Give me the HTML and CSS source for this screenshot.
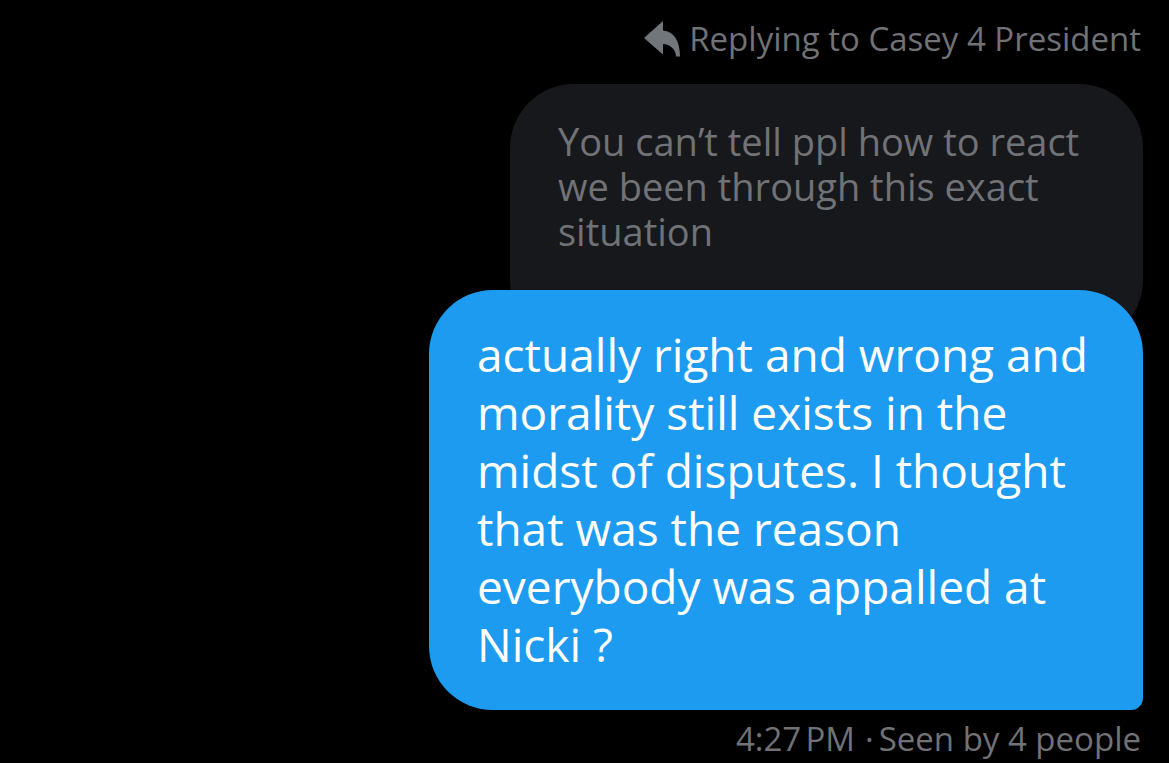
FILE: index.html
```html
<!DOCTYPE html>
<html lang="en">
<head>
<meta charset="utf-8">
<meta name="viewport" content="width=device-width, initial-scale=1">
<title>Messages</title>
<link rel="stylesheet" href="styles.css">
</head>
<body>
<main class="thread">
  <header class="reply-label">
    <svg class="reply-icon" viewBox="0 0 36 36" aria-hidden="true"><path d="M0 17 19 0V9.500C30 10.500 36 20 36 35.500H32C32 28 26 23.500 19 23V33.500Z"/></svg>
    <span>Replying to Casey 4 President</span>
  </header>
  <blockquote class="quoted">You can’t tell ppl how to react<br>we been through this exact<br>situation</blockquote>
  <p class="message">actually right and wrong and<br>morality still exists in the<br>midst of disputes. I thought<br>that was the reason<br>everybody was appalled at<br>Nicki ?</p>
  <footer class="receipt"><time>4:27&#8239;PM</time><span class="status"><span>·</span><span>Seen by 4 people</span></span></footer>
</main>
</body>
</html>
```
FILE: styles.css
```css
* { box-sizing: border-box; }

body {
  margin: 0;
  background: #000;
  color: #707276;
  font-family: "Open Sans", "Noto Sans", sans-serif;
}

.thread {
  display: flex;
  flex-direction: column;
  align-items: flex-end;
  padding: 14px 26px 0;
}

.reply-label {
  display: flex;
  align-items: center;
  gap: 9px;
  padding-right: 2px;
  font-size: 33px;
  line-height: 50px;
}

.reply-icon {
  width: 36px;
  height: 36px;
  fill: #71767b;
}

.quoted {
  width: 633px;
  max-width: 100%;
  margin: 20px 0 0;
  padding: 35px 48px 90px;
  border-radius: 64px;
  background: #17181c;
  font-size: 38px;
  line-height: 45px;
}

.message {
  position: relative;
  width: 714px;
  max-width: 100%;
  margin: -54px 0 0;
  padding: 35px 48px 37px;
  border-radius: 64px 64px 12px 64px;
  background: #1d9bf0;
  color: #fff;
  font-size: 46px;
  line-height: 58px;
}

.receipt {
  display: flex;
  gap: 10px;
  padding: 7px 2px 0 0;
  font-size: 33px;
  line-height: 44px;
}

.status {
  display: flex;
  gap: 5px;
}
```
